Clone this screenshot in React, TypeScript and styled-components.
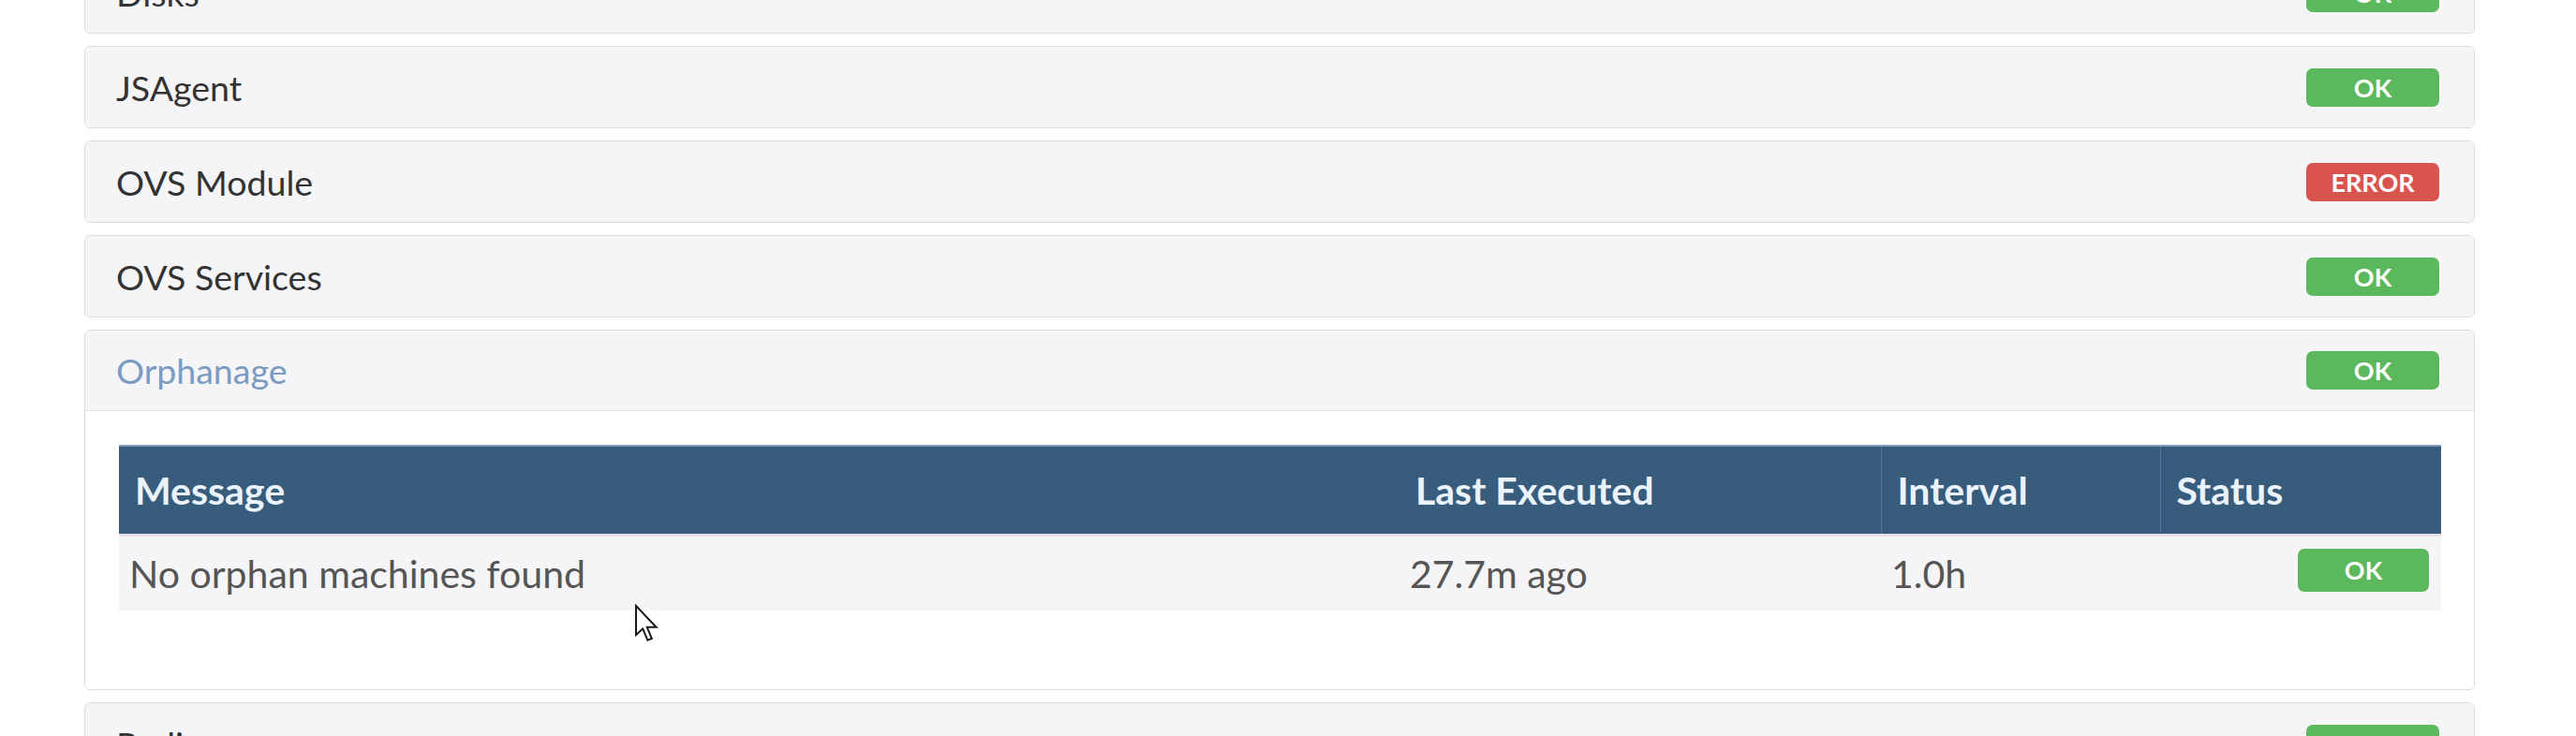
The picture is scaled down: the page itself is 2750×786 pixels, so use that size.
import React from "react";
import styled, { createGlobalStyle } from "styled-components";

const Global = createGlobalStyle`
  html, body {
    margin: 0;
    padding: 0;
    background: #ffffff;
    overflow: hidden;
    font-family: Lato, "Open Sans", "Liberation Sans", sans-serif;
  }
`;

const Page = styled.main`
  position: relative;
  margin-top: -52px;
  padding: 0 108px 0 90px;
  display: flex;
  flex-direction: column;
  gap: 13px;
`;

const Panel = styled.section`
  background: #ffffff;
  border: 1px solid #dcdce0;
  border-radius: 6px;
  overflow: hidden;
`;

const PanelHeader = styled.div<{ $open?: boolean }>`
  box-sizing: border-box;
  height: 86px;
  display: flex;
  align-items: center;
  justify-content: space-between;
  padding: 0 37px 0 33px;
  background: #f5f5f7;
  border-bottom: ${(p) => (p.$open ? "1px solid #e2e2e5" : "none")};
`;

const Title = styled.h3<{ $active?: boolean }>`
  margin: 0;
  font-family: Lato, "Open Sans", sans-serif;
  font-weight: 400;
  font-size: 37.5px;
  color: ${(p) => (p.$active ? "#7a9bc2" : "#333333")};
`;

const Badge = styled.span<{ $kind: "ok" | "error"; $w?: number; $h?: number }>`
  display: inline-flex;
  vertical-align: top;
  align-items: center;
  justify-content: center;
  width: ${(p) => p.$w ?? 142}px;
  height: ${(p) => p.$h ?? 41}px;
  border-radius: 7px;
  background: ${(p) => (p.$kind === "ok" ? "#5cb85c" : "#d9534f")};
  color: #ffffff;
  font-family: Lato, "Open Sans", sans-serif;
  font-weight: 700;
  font-size: 27px;
  line-height: 1;
`;

const PanelBody = styled.div`
  padding: 36px 37px 84px 36px;
  background: #ffffff;
`;

const Table = styled.table`
  width: 100%;
  border-collapse: collapse;
  table-layout: fixed;
  font-family: Lato, "Open Sans", sans-serif;
`;

const Th = styled.th<{ $divider?: boolean }>`
  box-sizing: border-box;
  height: 95px;
  padding: 0 17px;
  text-align: left;
  vertical-align: middle;
  background: #385c7b;
  color: #eaf3fb;
  font-weight: 700;
  font-size: 41px;
  border-top: 2px solid #7e9ab4;
  border-bottom: 3px solid #e8e3e7;
  border-left: ${(p) => (p.$divider ? "1px solid #54748f" : "none")};
`;

const Td = styled.td<{ $status?: boolean }>`
  box-sizing: border-box;
  height: 81px;
  padding: ${(p) => (p.$status ? "13px 13px 0 11px" : "0 11px")};
  text-align: ${(p) => (p.$status ? "right" : "left")};
  vertical-align: ${(p) => (p.$status ? "top" : "middle")};
  background: #f5f5f7;
  color: #555555;
  font-weight: 400;
  font-size: 41px;
`;

const Cursor = styled.svg`
  position: absolute;
  left: 677px;
  top: 697px;
  pointer-events: none;
`;

type Status = "ok" | "error";

const Row: React.FC<{ name: string; status: Status }> = ({ name, status }) => (
  <Panel>
    <PanelHeader>
      <Title>{name}</Title>
      <Badge $kind={status}>{status === "ok" ? "OK" : "ERROR"}</Badge>
    </PanelHeader>
  </Panel>
);

const columns = [
  { label: "Message", width: 1367 },
  { label: "Last Executed", width: 514 },
  { label: "Interval", width: 298 },
  { label: "Status", width: 300 },
];

export default function App() {
  return (
    <>
      <Global />
      <Page>
        <Row name="Disks" status="ok" />
        <Row name="JSAgent" status="ok" />
        <Row name="OVS Module" status="error" />
        <Row name="OVS Services" status="ok" />
        <Panel>
          <PanelHeader $open>
            <Title $active>Orphanage</Title>
            <Badge $kind="ok">OK</Badge>
          </PanelHeader>
          <PanelBody>
            <Table>
              <colgroup>
                {columns.map((c) => (
                  <col key={c.label} style={{ width: c.width }} />
                ))}
              </colgroup>
              <thead>
                <tr>
                  {columns.map((c, i) => (
                    <Th key={c.label} $divider={i >= 2}>
                      {c.label}
                    </Th>
                  ))}
                </tr>
              </thead>
              <tbody>
                <tr>
                  <Td>No orphan machines found</Td>
                  <Td>27.7m ago</Td>
                  <Td>1.0h</Td>
                  <Td $status>
                    <Badge $kind="ok" $w={140} $h={46}>
                      OK
                    </Badge>
                  </Td>
                </tr>
              </tbody>
            </Table>
          </PanelBody>
        </Panel>
        <Row name="Redis" status="ok" />
        <Cursor width="28" height="42" viewBox="0 0 14 21">
          <path
            d="M1 1 L1 16.5 L4.6 13.2 L7.2 19.4 L9.4 18.5 L6.9 12.4 L11.8 12.4 Z"
            fill="#ffffff"
            stroke="#1a1a1a"
            strokeWidth="1"
            strokeLinejoin="miter"
          />
        </Cursor>
      </Page>
    </>
  );
}
